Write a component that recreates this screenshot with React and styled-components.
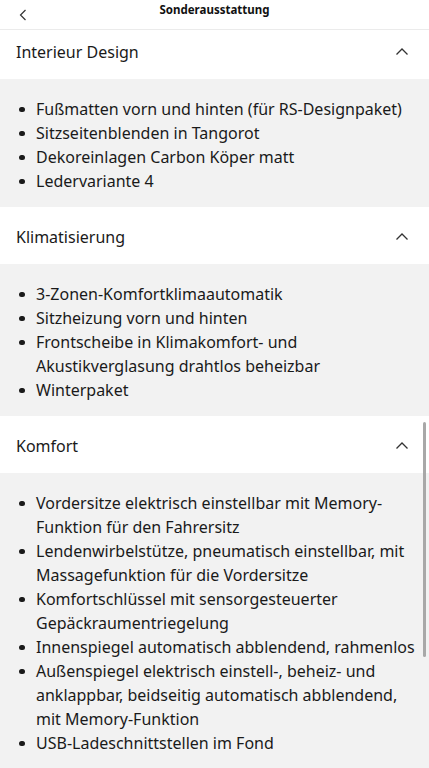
import React from 'react'
import styled, { createGlobalStyle } from 'styled-components'

const sections = [
    {
        title: 'Interieur Design',
        items: [
            'Fußmatten vorn und hinten (für RS-Designpaket)',
            'Sitzseitenblenden in Tangorot',
            'Dekoreinlagen Carbon Köper matt',
            'Ledervariante 4',
        ],
    },
    {
        title: 'Klimatisierung',
        items: [
            '3-Zonen-Komfortklimaautomatik',
            'Sitzheizung vorn und hinten',
            'Frontscheibe in Klimakomfort- und Akustikverglasung drahtlos beheizbar',
            'Winterpaket',
        ],
    },
    {
        title: 'Komfort',
        items: [
            'Vordersitze elektrisch einstellbar mit Memory-Funktion für den Fahrersitz',
            'Lendenwirbelstütze, pneumatisch einstellbar, mit Massagefunktion für die Vordersitze',
            'Komfortschlüssel mit sensorgesteuerter Gepäckraumentriegelung',
            'Innenspiegel automatisch abblendend, rahmenlos',
            'Außenspiegel elektrisch einstell-, beheiz- und anklappbar, beidseitig automatisch abblendend, mit Memory-Funktion',
            'USB-Ladeschnittstellen im Fond',
        ],
    },
]

const GlobalStyle = createGlobalStyle`
    html, body {
        margin: 0;
        padding: 0;
        background: #ffffff;
    }
    body {
        font-family: "Noto Sans", "Open Sans", sans-serif;
        color: #1a1a1a;
    }
`

const Page = styled.div`
    position: relative;
    width: 429px;
    height: 768px;
    display: flex;
    flex-direction: column;
    overflow: hidden;
    background: #f2f2f2;
`

const TopBar = styled.header`
    flex: 0 0 auto;
    height: 29px;
    display: grid;
    grid-template-columns: 48px 1fr 48px;
    align-items: center;
    background: #ffffff;
    border-bottom: 1px solid #ebebeb;
`

const BackButton = styled.button`
    border: 0;
    background: none;
    padding: 0 0 0 19px;
    height: 29px;
    display: flex;
    align-items: center;
    color: #333;
`

const Title = styled.h1`
    margin: 0;
    text-align: center;
    font-size: 11.5px;
    font-weight: 700;
    line-height: 18px;
    padding-bottom: 10px;
    color: #111;
`

const Viewport = styled.main`
    flex: 1 1 auto;
    overflow: hidden;
`

const Content = styled.div`
    margin-top: -8px;
`

const SectionHeader = styled.div`
    height: 57px;
    display: flex;
    align-items: center;
    justify-content: space-between;
    padding: 2px 20px 0 16px;
    box-sizing: border-box;
    background: #ffffff;
    font-size: 16px;
`

const List = styled.ul`
    margin: 0;
    padding: 18px 12px 14px 36px;
    list-style: none;
    background: #f2f2f2;
`

const Item = styled.li`
    position: relative;
    font-size: 16px;
    line-height: 24px;

    &::before {
        content: '';
        position: absolute;
        left: -17px;
        top: 9.5px;
        width: 5.5px;
        height: 5.5px;
        border-radius: 50%;
        background: #1a1a1a;
    }
`

const ScrollThumb = styled.div`
    position: absolute;
    right: 3px;
    top: 422px;
    width: 3px;
    height: 235px;
    border-radius: 2px;
    background: #a8a8a8;
`

const Chevron = ({ up }) => (
    <svg width="14" height="10" viewBox="0 0 14 10" fill="none">
        <path d={up ? 'M1.5 7.5 L7 2 L12.5 7.5' : 'M1.5 2.5 L7 8 L12.5 2.5'} stroke="#333" strokeWidth="1.3" />
    </svg>
)

const App = () => {
    return (
        <>
            <GlobalStyle />
            <Page>
                <TopBar>
                    <BackButton aria-label="Zurück">
                        <svg width="8" height="12" viewBox="0 0 8 12" fill="none">
                            <path d="M6.5 1 L1.5 6 L6.5 11" stroke="#333" strokeWidth="1.2" />
                        </svg>
                    </BackButton>
                    <Title>Sonderausstattung</Title>
                    <span />
                </TopBar>
                <Viewport>
                    <Content>
                        {sections.map((section) => (
                            <section key={section.title}>
                                <SectionHeader>
                                    {section.title}
                                    <Chevron up />
                                </SectionHeader>
                                <List>
                                    {section.items.map((item) => (
                                        <Item key={item}>{item}</Item>
                                    ))}
                                </List>
                            </section>
                        ))}
                    </Content>
                </Viewport>
                <ScrollThumb />
            </Page>
        </>
    )
}

export default App
